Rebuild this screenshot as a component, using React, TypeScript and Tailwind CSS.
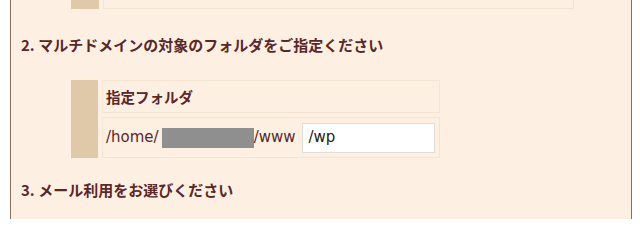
import React from "react";

const font = { fontFamily: '"DejaVu Sans", "Noto Sans CJK JP", sans-serif' };
const jp = { fontFamily: '"Noto Sans CJK JP", sans-serif' };

export default function App() {
  return (
    <div className="w-[640px] h-[219px] overflow-hidden bg-white" style={font}>
      <div className="ml-[10px] w-[622px] h-[219px] border-l border-r border-[#8a6d5c] bg-[#fdf0e3] text-[#5a2828]">
        <div className="flex gap-[4px] pl-[60px] h-[9px]">
          <div className="w-[28px] h-[9px] bg-[#dfc9a9]" />
          <div className="w-[471px] h-[9px] border border-t-0 border-[#f6e4d2]" />
        </div>

        <h2 className="pl-[10px] mt-[27px] text-[15px] font-bold leading-[18px]" style={jp}>
          2. マルチドメインの対象のフォルダをご指定ください
        </h2>

        <div className="flex gap-[4px] pl-[60px] mt-[26px]">
          <div className="w-[27px] h-[78px] bg-[#dfc9a9]" />
          <div className="flex flex-col gap-[4px] w-[338px]">
            <div className="h-[33px] border border-[#f6e4d2] flex items-center px-[3px]">
              <span className="text-[14.5px] font-bold" style={jp}>指定フォルダ</span>
            </div>
            <div className="h-[41px] border border-[#f6e4d2] flex items-center px-[3px] text-[15px]">
              <span>/home/</span>
              <span className="inline-block w-[92px] h-[20px] bg-[#8f8f8f] ml-[3px]" />
              <span>/www</span>
              <div className="ml-[6px] w-[133px] h-[30px] bg-white border border-[#e2dcd6] flex items-center pl-[6px] text-[15px] text-[#222]">
                /wp
              </div>
            </div>
          </div>
        </div>

        <h2 className="pl-[10px] mt-[23px] text-[15px] font-bold leading-[18px]" style={jp}>
          3. メール利用をお選びください
        </h2>
      </div>
    </div>
  );
}
